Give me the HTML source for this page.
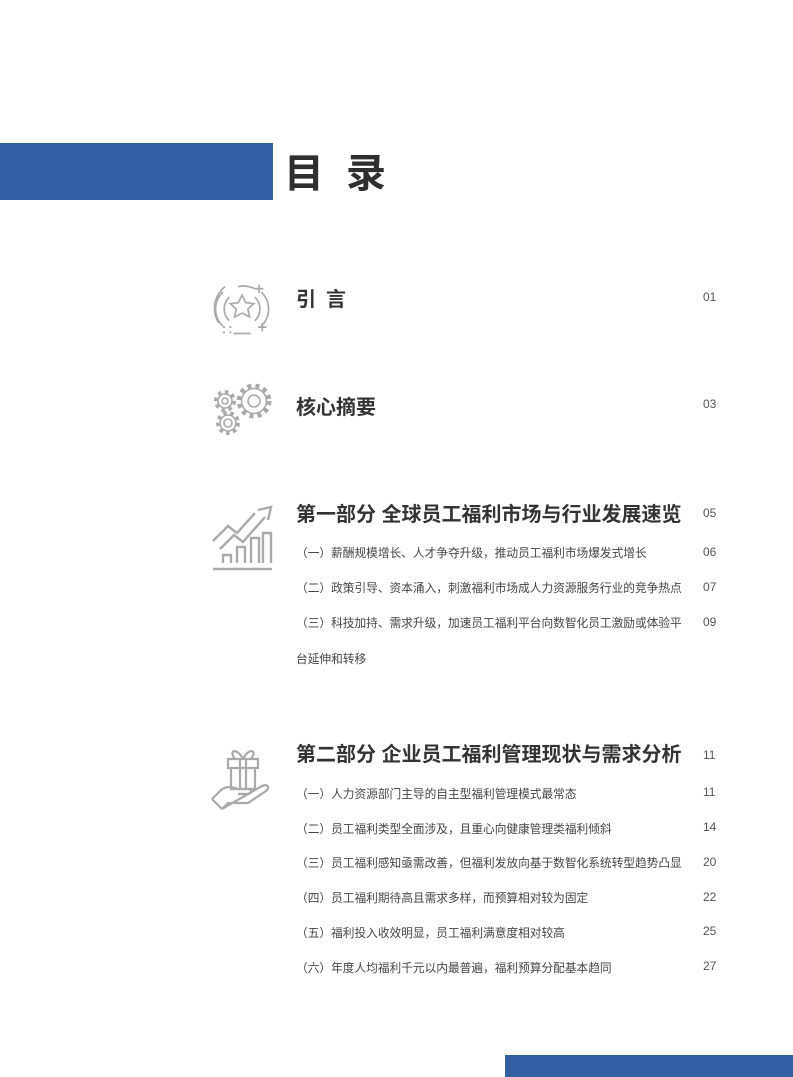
<!DOCTYPE html>
<html><head><meta charset="utf-8"><style>
body{margin:0;width:793px;height:1077px;background:#fff;position:relative;overflow:hidden;font-family:"Liberation Sans","Noto Sans CJK SC",sans-serif;color:#3a3a3a}
.a{position:absolute;white-space:nowrap}
.h{font-size:20px;font-weight:bold;color:#333;left:296px;line-height:24px}
.s{font-size:11.7px;color:#444;left:296px;line-height:16px}
.n{font-size:12px;color:#555;left:703px;line-height:16px}
svg{position:absolute}
</style></head><body>
<div class="a" style="left:0;top:143px;width:273px;height:57px;background:#3460a4"></div>
<div class="a" style="left:284px;top:148px;font-size:40px;font-weight:bold;color:#2f2f2f;line-height:52px;letter-spacing:22px">目录</div>
<div class="a" style="left:505px;top:1055px;width:288px;height:22px;background:#3460a4"></div>

<svg style="left:208px;top:280px" width="66" height="58" viewBox="0 0 62 54" fill="none" stroke="#aaa" stroke-width="1.6">
<path d="M32 14 l3.5 7 7.5 1 -5.5 5 1.5 7.5 -7 -3.7 -7 3.7 1.5 -7.5 -5.5 -5 7.5 -1z"/>
<path d="M20 16 a15 15 0 0 0 0 22"/><path d="M44 16 a15 15 0 0 1 0 22"/>
<path d="M14 11 a22 22 0 0 0 0 32"/><path d="M50 11 a22 22 0 0 1 0 32"/>
<path d="M10 40 a26 26 0 0 1 6 -34"/><path d="M24 50 h16"/><path d="M28 6 a24 24 0 0 1 16 2"/>
<path d="M48 4 v8 M44 8 h8 M51 40 v8 M47 44 h8"/><path d="M14 44 h2 M20 44 h2 M14 49 h2 M20 49 h2"/>
</svg>
<svg style="left:211px;top:381px" width="62" height="56" viewBox="0 0 62 56" fill="none" stroke="#aaa">
<circle cx="43" cy="20" r="15" stroke-width="5" stroke-dasharray="4 4"/><circle cx="43" cy="20" r="12.5" stroke-width="1.6"/><circle cx="43" cy="20" r="6" stroke-width="1.6"/>
<circle cx="17" cy="42" r="10" stroke-width="4" stroke-dasharray="3.5 3.5"/><circle cx="17" cy="42" r="8" stroke-width="1.6"/><circle cx="17" cy="42" r="4" stroke-width="1.6"/>
<circle cx="14" cy="20" r="9" stroke-width="4" stroke-dasharray="3.5 3.5"/><circle cx="14" cy="20" r="7" stroke-width="1.6"/><circle cx="14" cy="20" r="3" stroke-width="1.6"/>
</svg>
<svg style="left:210px;top:505px" width="64" height="66" viewBox="0 0 64 66" fill="none" stroke="#aaa" stroke-width="2.4">
<path d="M3 36 L18 21 27 28 45 8"/><path d="M10 44 L24 30 33 37 55 12"/><path d="M48 5 L61 2 58 15"/>
<path d="M13 58 v-8 h8 v8 M27 58 v-16 h8 v16 M41 58 v-25 h8 v25 M53 58 v-30 h8 v30"/><path d="M3 64 h59"/>
</svg>
<svg style="left:210px;top:743px" width="64" height="68" viewBox="0 0 64 68" fill="none" stroke="#aaa" stroke-width="2.2">
<path d="M18 16 h30 v9 h-30z M21 25 v21 h24 v-21 M30 16 v30 M36 16 v30"/><path d="M33 16 c-6 -12 -15 -9 -8 0 M33 16 c6 -12 15 -9 8 0"/>
<path d="M2 56 l8 -8 c6 -6 12 -4 18 -2 h10 c4 0 4 5 0 5 h-10 M38 51 l14 -8 c6 -3 8 2 4 5 l-18 12 h-20 l-6 6z"/><path d="M2 56 l10 10"/>
</svg>

<div class="a h" style="top:288px;letter-spacing:10px">引言</div><div class="a n" style="top:289px">01</div>
<div class="a h" style="top:396px">核心摘要</div><div class="a n" style="top:396px">03</div>
<div class="a h" style="top:503px">第一部分 全球员工福利市场与行业发展速览</div><div class="a n" style="top:505px">05</div>
<div class="a s" style="top:546px">（一）薪酬规模增长、人才争夺升级，推动员工福利市场爆发式增长</div><div class="a n" style="top:544px">06</div>
<div class="a s" style="top:581px">（二）政策引导、资本涌入，刺激福利市场成人力资源服务行业的竞争热点</div><div class="a n" style="top:579px">07</div>
<div class="a s" style="top:616px">（三）科技加持、需求升级，加速员工福利平台向数智化员工激励或体验平</div><div class="a n" style="top:614px">09</div>
<div class="a s" style="top:652px">台延伸和转移</div>
<div class="a h" style="top:743px">第二部分 企业员工福利管理现状与需求分析</div><div class="a n" style="top:747px">11</div>
<div class="a s" style="top:787px">（一）人力资源部门主导的自主型福利管理模式最常态</div><div class="a n" style="top:784px">11</div>
<div class="a s" style="top:822px">（二）员工福利类型全面涉及，且重心向健康管理类福利倾斜</div><div class="a n" style="top:819px">14</div>
<div class="a s" style="top:856px">（三）员工福利感知亟需改善，但福利发放向基于数智化系统转型趋势凸显</div><div class="a n" style="top:854px">20</div>
<div class="a s" style="top:891px">（四）员工福利期待高且需求多样，而预算相对较为固定</div><div class="a n" style="top:889px">22</div>
<div class="a s" style="top:926px">（五）福利投入收效明显，员工福利满意度相对较高</div><div class="a n" style="top:923px">25</div>
<div class="a s" style="top:961px">（六）年度人均福利千元以内最普遍，福利预算分配基本趋同</div><div class="a n" style="top:958px">27</div>
</body></html>
